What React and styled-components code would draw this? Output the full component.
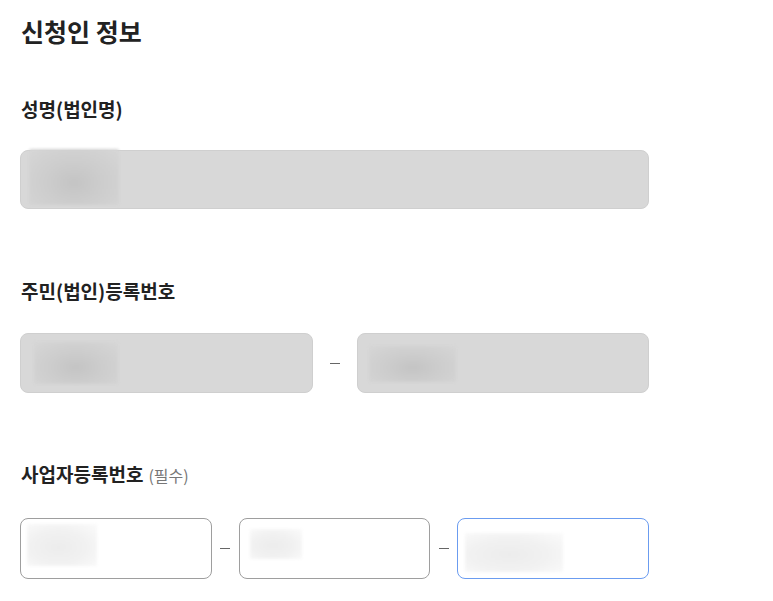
import React from "react";
import styled, { createGlobalStyle } from "styled-components";

const GlobalStyle = createGlobalStyle`
    body {
        margin: 0;
        background: #ffffff;
        font-family: "Noto Sans CJK KR", "Noto Sans", sans-serif;
        color: #222222;
    }
`;

const Page = styled.div`
    width: 773px;
    padding: 14px 0 0 20px;
    box-sizing: border-box;
`;

const Title = styled.h2`
    margin: 0 0 0 1px;
    font-size: 25px;
    font-weight: 700;
    line-height: 34px;
`;

const Section = styled.section`
    margin-top: ${(props) => props.gap}px;
`;

const Label = styled.h3`
    margin: 0 0 0 1px;
    font-size: 19px;
    font-weight: 700;
    line-height: 26px;
`;

const Hint = styled.span`
    font-size: 16px;
    font-weight: 400;
    color: #777777;
    margin-left: 5px;
`;

const Row = styled.div`
    display: flex;
    align-items: center;
    width: 629px;
    margin-top: ${(props) => props.gap}px;
`;

const Field = styled.div`
    position: relative;
    flex: 1;
    height: ${(props) => props.h}px;
    box-sizing: border-box;
    border-radius: 8px;
    background: ${(props) => (props.disabled ? "#d8d8d8" : "#ffffff")};
    border: 1px solid
        ${(props) =>
            props.focus ? "#6b9cf0" : props.disabled ? "#cfcfcf" : "#9e9e9e"};
`;

const Dash = styled.span`
    flex: none;
    width: ${(props) => props.w}px;
    height: 1px;
    display: flex;
    justify-content: center;
    &::before {
        content: "";
        width: 10px;
        height: 1px;
        background: #666666;
    }
`;

/* redacted value smudge lying over the field */
const Smudge = styled.div`
    position: absolute;
    border-radius: 2px;
    background: ${(props) =>
        props.dark
            ? "radial-gradient(ellipse at 50% 60%, #c4c4c4 0%, #cdcdcd 45%, #d6d6d6 100%)"
            : "radial-gradient(ellipse at 45% 55%, #ececec 0%, #f1f1f1 50%, #fbfbfb 100%)"};
    filter: blur(1.5px);
`;

const blob = (left, top, width, height) => ({ left, top, width, height });

export default function App() {
    return (
        <Page>
            <GlobalStyle />
            <Title>신청인 정보</Title>

            <Section gap={48}>
                <Label>성명(법인명)</Label>
                <Row gap={28}>
                    <Field disabled h={59}>
                        <Smudge dark style={blob(8, -2, 90, 56)} />
                    </Field>
                </Row>
            </Section>

            <Section gap={69}>
                <Label>주민(법인)등록번호</Label>
                <Row gap={29}>
                    <Field disabled h={60}>
                        <Smudge dark style={blob(13, 8, 84, 42)} />
                    </Field>
                    <Dash w={44} />
                    <Field disabled h={60}>
                        <Smudge dark style={blob(11, 12, 87, 36)} />
                    </Field>
                </Row>
            </Section>

            <Section gap={68}>
                <Label>
                    사업자등록번호<Hint>(필수)</Hint>
                </Label>
                <Row gap={30}>
                    <Field h={61}>
                        <Smudge style={blob(6, 5, 70, 42)} />
                    </Field>
                    <Dash w={27} />
                    <Field h={61}>
                        <Smudge style={blob(10, 10, 52, 30)} />
                    </Field>
                    <Dash w={27} />
                    <Field focus h={61}>
                        <Smudge style={blob(7, 14, 98, 39)} />
                    </Field>
                </Row>
            </Section>
        </Page>
    );
}
